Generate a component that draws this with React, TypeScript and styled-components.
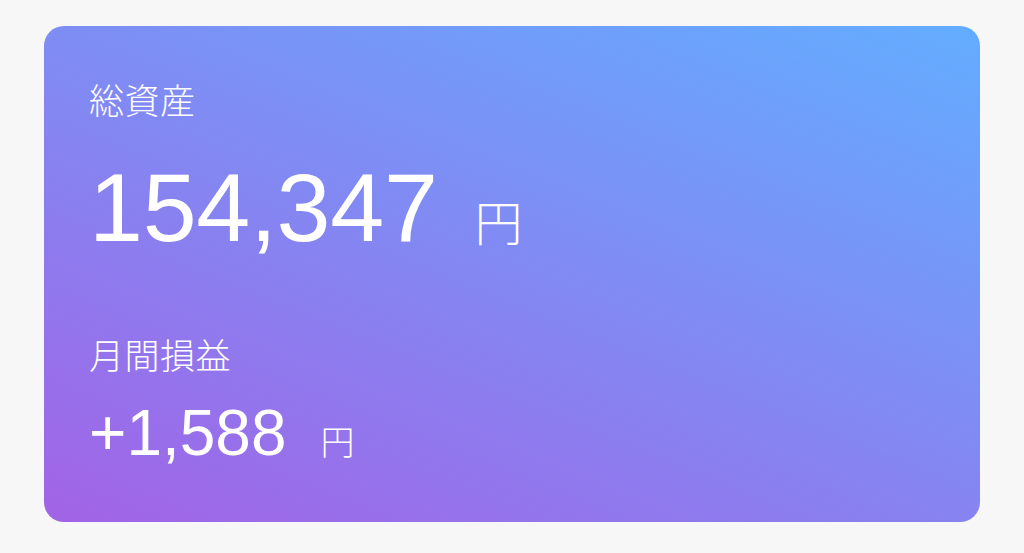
import React from "react";
import styled, { createGlobalStyle } from "styled-components";

const GlobalStyle = createGlobalStyle`
  html, body {
    margin: 0;
    padding: 0;
    background: #f7f7f7;
  }
  body {
    font-family: "Liberation Sans", "Noto Sans CJK JP", sans-serif;
  }
`;

const Page = styled.div`
  width: 1024px;
  height: 553px;
  box-sizing: border-box;
  padding: 26px 44px 31px;
  display: flex;
`;

const Card = styled.section`
  flex: 1;
  border-radius: 20px;
  background: linear-gradient(22deg, #a263e6 0%, #63adff 100%);
  color: #ffffff;
  padding: 55px 45px 0;
  display: flex;
  flex-direction: column;
`;

const Label = styled.div<{ $gap: number }>`
  margin-top: ${(p) => p.$gap}px;
  font-family: "Noto Sans CJK JP", sans-serif;
  font-size: 35px;
  line-height: 1;
  font-weight: 300;
  letter-spacing: 0.5px;
`;

const AmountRow = styled.div<{ $gap: number }>`
  margin-top: ${(p) => p.$gap}px;
  display: flex;
  align-items: baseline;
  line-height: 1;
`;

const Amount = styled.span<{ $size: number; $track: number }>`
  font-family: "Liberation Sans", sans-serif;
  font-size: ${(p) => p.$size}px;
  line-height: 1;
  letter-spacing: ${(p) => p.$track}px;
`;

const Unit = styled.span<{ $size: number; $gap: number }>`
  font-family: "Noto Sans CJK JP", sans-serif;
  font-weight: 300;
  font-size: ${(p) => p.$size}px;
  line-height: 1;
  margin-left: ${(p) => p.$gap}px;
`;

export default function App() {
  return (
    <>
      <GlobalStyle />
      <Page>
        <Card>
          <Label $gap={0}>総資産</Label>
          <AmountRow $gap={43}>
            <Amount $size={97} $track={-0.3}>154,347</Amount>
            <Unit $size={48} $gap={37}>円</Unit>
          </AmountRow>
          <Label $gap={80}>月間損益</Label>
          <AmountRow $gap={30}>
            <Amount $size={64} $track={0}>+1,588</Amount>
            <Unit $size={34} $gap={34}>円</Unit>
          </AmountRow>
        </Card>
      </Page>
    </>
  );
}
